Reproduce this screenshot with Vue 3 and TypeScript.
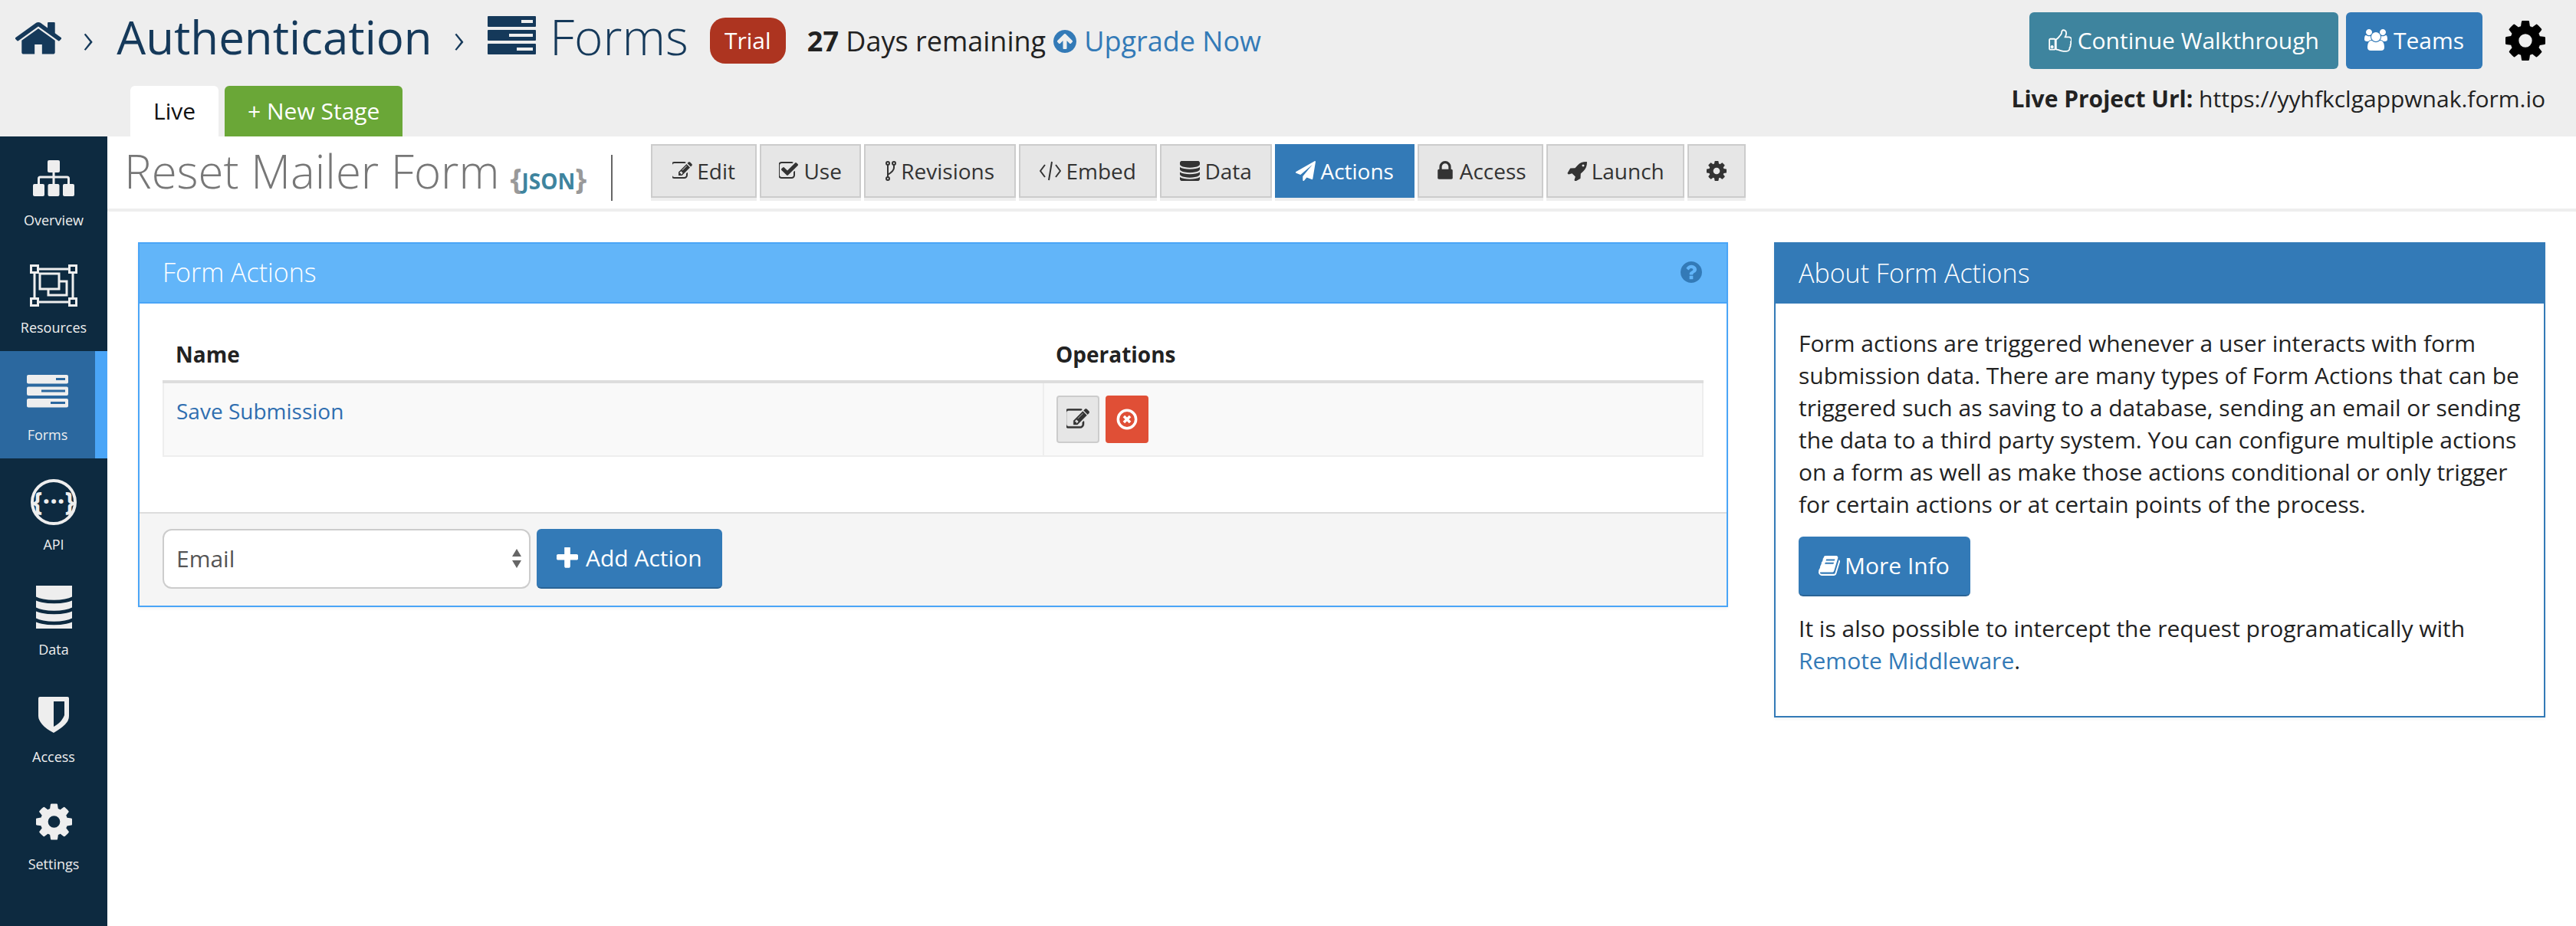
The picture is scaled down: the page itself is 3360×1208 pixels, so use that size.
<template>
  <div class="page">
    <header class="top">
      <div class="top-left">
        <div class="crumbs">
          <svg class="home" viewBox="100 130 1592 1420" preserveAspectRatio="none"><path :d="fa.home" /></svg>
          <span class="sep">›</span>
          <span class="crumb">Authentication</span>
          <span class="sep">›</span>
          <svg class="forms-ico" viewBox="0 0 63 50">
            <rect width="63" height="14" rx="1" y="0" />
            <rect width="63" height="14" rx="1" y="18" />
            <rect width="63" height="14" rx="1" y="36" />
            <rect class="slot" x="44" y="5" width="15" height="4" />
            <rect class="slot" x="28" y="23" width="31" height="4" />
            <rect class="slot" x="38" y="41" width="21" height="4" />
          </svg>
          <span class="crumb crumb--light">Forms</span>
          <span class="trial">Trial</span>
          <span class="days"><strong>27</strong> Days remaining</span>
          <a class="upgrade">
            <svg viewBox="128 128 1536 1536"><path :d="fa.up" /></svg>
            Upgrade Now
          </a>
        </div>
        <div class="stages">
          <span class="stage">Live</span>
          <span class="stage stage--new">+ New Stage</span>
        </div>
      </div>
      <div class="top-right">
        <div class="top-actions">
          <button class="tbtn tbtn--teal">
            <svg viewBox="0 60 1664 1664"><path class="outline" :d="fa.thumb" /></svg>
            Continue Walkthrough
          </button>
          <button class="tbtn">
            <svg viewBox="0 128 1920 1664"><path :d="fa.users" /></svg>
            Teams
          </button>
          <svg class="top-gear" viewBox="128 128 1536 1536"><path :d="fa.cog" /></svg>
        </div>
        <p class="url"><strong>Live Project Url:</strong> https://yyhfkclgappwnak.form.io</p>
      </div>
    </header>

    <nav class="side">
      <a v-for="item in nav" :key="item.label" class="side-item" :class="{ 'side-item--on': item.label === 'Forms' }">
        <svg v-if="item.icon === 'tree'" class="ico-tree" viewBox="0 0 54 47">
          <rect x="19" y="0" width="16" height="16" rx="2" />
          <rect x="0" y="31" width="15" height="16" rx="2" />
          <rect x="19.500" y="31" width="15" height="16" rx="2" />
          <rect x="39" y="31" width="15" height="16" rx="2" />
          <path class="line" d="M27 15v17M7.500 32v-8q0-2 2-2h35q2 0 2 2v8" />
        </svg>
        <svg v-else-if="item.icon === 'res'" class="ico-res" viewBox="0 0 62 55">
          <path class="line" d="M6 6h50v43H6z" />
          <path class="line" d="M13 12h25v20H13zM24 32v8h24V22H38" />
          <path class="handle" d="M1.500 1.500h9v9h-9zM51.500 1.500h9v9h-9zM1.500 44.500h9v9h-9zM51.500 44.500h9v9h-9z" />
        </svg>
        <svg v-else-if="item.icon === 'forms'" class="ico-forms" viewBox="0 0 54 43">
          <rect width="54" height="11.500" rx="2" y="0" />
          <rect width="54" height="11.500" rx="2" y="15.500" />
          <rect width="54" height="11.500" rx="2" y="31" />
          <rect class="slot-on" x="38" y="4" width="12" height="3" />
          <rect class="slot-on" x="19" y="19.500" width="31" height="3" />
          <rect class="slot-on" x="31" y="35" width="19" height="3" />
        </svg>
        <svg v-else-if="item.icon === 'api'" class="ico-api" viewBox="0 0 60 60">
          <circle class="line line--api" cx="30" cy="30" r="28" />
          <text x="30" y="41" text-anchor="middle">{···}</text>
        </svg>
        <svg v-else-if="item.icon === 'shield'" class="ico-shield" viewBox="0 0 40 47">
          <path fill-rule="evenodd" d="M2 0h36q2 0 2 2v23q0 6-5 11t-15 11Q10 42 5 36T0 25V2q0-2 2-2zM20 6v33q7-4 10-8t4-7V6z" />
        </svg>
        <svg v-else class="ico-fa" :viewBox="item.icon === 'db' ? '256 128 1280 1536' : '128 128 1536 1536'">
          <path :d="item.icon === 'db' ? fa.db : fa.cog" />
        </svg>
        <span>{{ item.label }}</span>
      </a>
    </nav>

    <main class="main">
      <div class="title-row">
        <h1 class="form-title">Reset Mailer Form</h1>
        <span class="json"><i>{</i>JSON<i>}</i></span>
        <span class="divider"></span>
        <div class="tabs">
          <a v-for="t in tabs" :key="t.key" class="tab" :class="{ 'tab--on': t.key === 'Actions' }">
            <svg v-if="t.key === 'Revisions'" class="fork" viewBox="0 0 14 26">
              <circle cx="3" cy="3" r="2" /><circle cx="11" cy="3" r="2" /><circle cx="3" cy="23" r="2" />
              <path d="M3 5v16M11 5v4q0 4-8 9" />
            </svg>
            <svg v-else-if="t.key === 'Embed'" class="code" viewBox="0 0 28 26">
              <path d="M7 5l-6 8 6 8M21 5l6 8-6 8M16 1l-4 24" />
            </svg>
            <svg v-else class="tab-ico" :viewBox="t.box"><path :d="t.path" /></svg>
            <span v-if="t.label">{{ t.label }}</span>
          </a>
        </div>
      </div>

      <div class="content">
        <section class="panel panel--sky">
          <div class="panel-head">
            <h2>Form Actions</h2>
            <svg class="help" viewBox="128 128 1536 1536"><path :d="fa.help" /></svg>
          </div>
          <div class="panel-body">
            <table class="grid">
              <thead>
                <tr><th class="name-col">Name</th><th>Operations</th></tr>
              </thead>
              <tbody>
                <tr>
                  <td class="name-cell"><a class="link">Save Submission</a></td>
                  <td>
                    <div class="ops">
                      <button class="op">
                        <svg viewBox="128 128 1664 1536"><path :d="fa.edit" /></svg>
                      </button>
                      <button class="op op--del">
                        <svg viewBox="0 0 24 24">
                          <circle cx="12" cy="12" r="10" />
                          <path d="M8.500 8.500l7 7M15.500 8.500l-7 7" />
                        </svg>
                      </button>
                    </div>
                  </td>
                </tr>
              </tbody>
            </table>
          </div>
          <div class="panel-foot">
            <div class="select-wrap">
              <select class="select"><option>Email</option></select>
              <span class="arrows"></span>
            </div>
            <button class="btn">
              <svg viewBox="192 192 1408 1408"><path :d="fa.plus" /></svg>
              Add Action
            </button>
          </div>
        </section>

        <aside class="panel panel--blue">
          <div class="panel-head"><h2>About Form Actions</h2></div>
          <div class="about">
            <p>Form actions are triggered whenever a user interacts with form submission data. There are many types of Form Actions that can be triggered such as saving to a database, sending an email or sending the data to a third party system. You can configure multiple actions on a form as well as make those actions conditional or only trigger for certain actions or at certain points of the process.</p>
            <button class="btn btn--info">
              <svg viewBox="64 128 1664 1536"><path :d="fa.book" /></svg>
              More Info
            </button>
            <p>It is also possible to intercept the request programatically with <a class="link-plain">Remote Middleware</a>.</p>
          </div>
        </aside>
      </div>
    </main>
  </div>
</template>

<script setup lang="ts">
const fa = {
  home: 'M1472 992v480q0 26-19 45t-45 19h-384v-384h-256v384h-384q-26 0-45-19t-19-45v-480q0-1 .5-3t.5-3l575-474 575 474q1 2 1 6zm223-69l-62 74q-8 9-21 11h-3q-13 0-21-7l-692-577-692 577q-12 8-24 7-13-2-21-11l-62-74q-8-10-7-23.500t11-21.500l719-599q32-26 76-26t76 26l244 204v-195q0-14 9-23t23-9h192q14 0 23 9t9 23v408l219 182q10 8 11 21.500t-7 23.500z',
  cog: 'M1152 896q0-106-75-181t-181-75-181 75-75 181 75 181 181 75 181-75 75-181zm512-109v222q0 12-8 23t-20 13l-185 28q-19 54-39 91 35 50 107 138 10 12 10 25t-9 23q-27 37-99 108t-94 71q-12 0-26-9l-138-108q-44 23-91 38-16 136-29 186-7 28-36 28h-222q-14 0-24.500-8.500t-11.500-21.500l-28-184q-49-16-90-37l-141 107q-10 9-25 9-14 0-25-11-126-114-165-168-7-10-7-23 0-12 8-23 15-21 51-66.500t54-70.500q-27-50-41-99l-183-27q-13-2-21-12.500t-8-23.500v-222q0-12 8-23t19-13l186-28q14-46 39-92-40-57-107-138-10-12-10-24 0-10 9-23 26-36 98.500-107.500t94.500-71.500q13 0 26 10l138 107q44-23 91-38 16-136 29-186 7-28 36-28h222q14 0 24.500 8.500t11.500 21.500l28 184q49 16 90 37l142-107q9-9 24-9 13 0 25 10 129 119 165 170 7 8 7 22 0 12-8 23-15 21-51 66.500t-54 70.500q26 50 41 98l183 28q13 2 21 12.500t8 23.500z',
  db: 'M896 768q237 0 443-43t325-127v170q0 69-103 128t-280 93.500-385 34.500-385-34.500-280-93.500-103-128v-170q119 84 325 127t443 43zm0 768q237 0 443-43t325-127v170q0 69-103 128t-280 93.500-385 34.500-385-34.500-280-93.500-103-128v-170q119 84 325 127t443 43zm0-384q237 0 443-43t325-127v170q0 69-103 128t-280 93.500-385 34.500-385-34.500-280-93.500-103-128v-170q119 84 325 127t443 43zm0-1152q208 0 385 34.500t280 93.500 103 128v128q0 69-103 128t-280 93.500-385 34.500-385-34.500-280-93.500-103-128v-128q0-69 103-128t280-93.500 385-34.500z',
  lock: 'M640 768h512v-192q0-106-75-181t-181-75-181 75-75 181v192zm832 96v576q0 40-28 68t-68 28h-960q-40 0-68-28t-28-68v-576q0-40 28-68t68-28h32v-192q0-184 132-316t316-132 316 132 132 316v192h32q40 0 68 28t28 68z',
  plus: 'M1600 736v192q0 40-28 68t-68 28h-416v416q0 40-28 68t-68 28h-192q-40 0-68-28t-28-68v-416h-416q-40 0-68-28t-28-68v-192q0-40 28-68t68-28h416v-416q0-40 28-68t68-28h192q40 0 68 28t28 68v416h416q40 0 68 28t28 68z',
  plane: 'M1764 11q33 24 27 64l-256 1536q-5 29-32 45-14 8-31 8-11 0-24-5l-453-185-242 295q-18 23-49 23-13 0-22-4-19-7-30.500-23.500t-11.500-36.500v-349l864-1059-1069 925-395-162q-37-14-40-55-2-40 32-59l1664-960q15-9 32-9 20 0 36 11z',
  edit: 'M888 1184l116-116-152-152-116 116v56h96v96h56zm440-720q-16-16-33 1l-350 350q-17 17-1 33t33-1l350-350q17-17 1-33zm80 594v190q0 119-84.500 203.500t-203.500 84.500h-832q-119 0-203.500-84.500t-84.500-203.500v-832q0-119 84.500-203.500t203.500-84.500h832q63 0 117 25 15 7 18 23 3 17-9 29l-49 49q-14 14-32 8-23-6-45-6h-832q-66 0-113 47t-47 113v832q0 66 47 113t113 47h832q66 0 113-47t47-113v-126q0-13 9-22l64-64q15-15 35-7t20 29zm-96-738l288 288-672 672h-288v-288zm444 132l-92 92-288-288 92-92q28-28 68-28t68 28l152 152q28 28 28 68t-28 68z',
  check: 'M1472 930v318q0 119-84.500 203.500t-203.500 84.500h-832q-119 0-203.500-84.500t-84.500-203.500v-832q0-119 84.500-203.500t203.500-84.500h832q63 0 117 25 15 7 18 23 3 17-9 29l-49 49q-10 10-23 10-3 0-9-2-23-6-45-6h-832q-66 0-113 47t-47 113v832q0 66 47 113t113 47h832q66 0 113-47t47-113v-254q0-13 9-22l64-64q10-10 23-10 6 0 12 3 20 8 20 29zm231-489l-814 814q-24 24-57 24t-57-24l-430-430q-24-24-24-57t24-57l110-110q24-24 57-24t57 24l263 263 647-647q24-24 57-24t57 24l110 110q24 24 24 57t-24 57z',
  rocket: 'M1504 448q0-40-28-68t-68-28-68 28-28 68 28 68 68 28 68-28 28-68zm224-288q0 249-75.500 430.500t-253.500 360.500q-81 80-195 176l-20 379q-2 16-16 26l-384 224q-7 4-16 4-12 0-23-9l-64-64q-13-14-8-32l85-276-281-281-276 85q-3 1-9 1-14 0-23-9l-64-64q-17-19-5-39l224-384q10-14 26-16l379-20q96-114 176-195 188-187 358-258t431-71q14 0 24 9.500t10 22.500z',
  users: 'M593 896q-162 5-265 128h-134q-82 0-138-40.500t-56-118.500q0-353 124-353 6 0 43.500 21t97.500 42.500 119 21.500q67 0 133-23-5 37-5 66 0 139 81 256zm1071 637q0 120-73 189.500t-194 69.500h-874q-121 0-194-69.500t-73-189.500q0-53 3.500-103.500t14-109 26.500-108.500 43-97.500 62-81 85.500-53.500 111.500-20q10 0 43 21.500t73 48 107 48 135 21.500 135-21.500 107-48 73-48 43-21.500q61 0 111.500 20t85.500 53.500 62 81 43 97.500 26.500 108.500 14 109 3.500 103.500zm-1024-1277q0 106-75 181t-181 75-181-75-75-181 75-181 181-75 181 75 75 181zm704 384q0 159-112.500 271.500t-271.500 112.500-271.500-112.500-112.500-271.500 112.500-271.500 271.500-112.500 271.500 112.500 112.500 271.500zm576 225q0 78-56 118.500t-138 40.500h-134q-103-123-265-128 81-117 81-256 0-29-5-66 66 23 133 23 59 0 119-21.500t97.500-42.500 43.500-21q124 0 124 353zm-128-609q0 106-75 181t-181 75-181-75-75-181 75-181 181-75 181 75 75 181z',
  thumb: 'M320 1344q0-26-19-45t-45-19q-27 0-45.500 19t-18.500 45q0 27 18.500 45.500t45.500 18.500q26 0 45-18.500t19-45.500zm160-512v640q0 26-19 45t-45 19h-288q-26 0-45-19t-19-45v-640q0-26 19-45t45-19h288q26 0 45 19t19 45zm1184 0q0 86-55 149 15 44 15 76 3 76-43 137 17 56 0 117-15 57-54 94 9 112-49 181-64 76-197 78h-129q-66 0-144-15.500t-121.500-29-120.500-39.500q-123-43-158-44-26-1-45-19.500t-19-44.500v-641q0-25 18-43.500t43-20.500q24-2 76-59t101-121q68-87 101-120 18-18 31-48t17.500-48.500 13.500-60.500q7-39 12.500-61t19.500-52 34-50q19-19 45-19 46 0 82.500 10.500t60 26 40 40.500 24 45 12 50 5 45 .5 39q0 38-9.500 76t-19 60-27.500 56q-3 6-10 18t-11 22-8 24h277q78 0 135 57t57 135z',
  book: 'M1703 478q40 57 18 129l-275 906q-19 64-76.500 107.500t-122.500 43.500h-923q-77 0-148.500-53.500t-99.500-131.500q-24-67-2-127 0-4 3-27t4-37q1-8-3-21.500t-3-19.500q2-11 8-21t16.500-23.500 16.500-23.500q23-38 45-91.500t30-91.500q3-10 .5-30t-.5-28q3-11 17-28t17-23q21-36 42-92t25-90q1-9-2.500-32t.5-28q4-13 22-30.500t22-22.500q19-26 42.500-84.500t27.500-96.500q1-8-3-25.500t-2-26.500q2-8 9-18t18-23 17-21q8-12 16.500-30.500t15-35 16-36 19.500-32 26.500-23.500 36-11.500 47.500 5.500l-1 3q38-9 51-9h761q74 0 114 56t18 130l-274 906q-36 119-71.500 153.500t-128.500 34.500h-869q-27 0-38 15-11 16-1 43 24 70 144 70h923q29 0 56-15.500t35-41.500l300-987q7-22 5-57 38 15 59 43zm-1064 2q-4 13 2 22.500t20 9.500h608q13 0 25.500-9.500t16.500-22.500l21-64q4-13-2-22.500t-20-9.500h-608q-13 0-25.500 9.500t-16.500 22.500zm-83 256q-4 13 2 22.500t20 9.500h608q13 0 25.500-9.500t16.500-22.500l21-64q4-13-2-22.500t-20-9.500h-608q-13 0-25.500 9.500t-16.500 22.500z',
  up: 'M1412 895q0-27-18-45l-362-362-91-91q-18-18-45-18t-45 18l-91 91-362 362q-18 18-18 45t18 45l91 91q18 18 45 18t45-18l189-189v502q0 26 19 45t45 19h128q26 0 45-19t19-45v-502l189 189q19 19 45 19t45-19l91-91q18-18 18-45zm252 1q0 209-103 385.500t-279.500 279.500-385.500 103-385.500-103-279.500-279.500-103-385.500 103-385.500 279.500-279.500 385.500-103 385.500 103 279.500 279.500 103 385.500z',
  help: 'M1024 1376v-192q0-14-9-23t-23-9h-192q-14 0-23 9t-9 23v192q0 14 9 23t23 9h192q14 0 23-9t9-23zm256-672q0-88-55.500-163t-138.500-116-170-41q-243 0-371 213-15 24 8 42l132 100q7 6 19 6 16 0 25-12 53-68 86-92 34-24 86-24 48 0 85.500 26t37.500 59q0 38-20 61t-68 45q-63 28-115.500 86.500t-52.500 125.500v36q0 14 9 23t23 9h192q14 0 23-9t9-23q0-19 21.500-49.500t54.500-49.500q32-18 49-28.500t46-35 44.500-48 28-60.500 12.500-81zm384 192q0 209-103 385.500t-279.500 279.500-385.500 103-385.500-103-279.500-279.500-103-385.500 103-385.500 279.500-279.500 385.500-103 385.500 103 279.500 279.500 103 385.500z',
}

const nav = [
  { label: 'Overview', icon: 'tree' },
  { label: 'Resources', icon: 'res' },
  { label: 'Forms', icon: 'forms' },
  { label: 'API', icon: 'api' },
  { label: 'Data', icon: 'db' },
  { label: 'Access', icon: 'shield' },
  { label: 'Settings', icon: 'cog' },
]

const tabs = [
  { key: 'Edit', label: 'Edit', path: fa.edit, box: '128 128 1664 1536' },
  { key: 'Use', label: 'Use', path: fa.check, box: '128 128 1664 1536' },
  { key: 'Revisions', label: 'Revisions', path: '', box: '' },
  { key: 'Embed', label: 'Embed', path: '', box: '' },
  { key: 'Data', label: 'Data', path: fa.db, box: '128 128 1536 1536' },
  { key: 'Actions', label: 'Actions', path: fa.plane, box: '0 0 1792 1792' },
  { key: 'Access', label: 'Access', path: fa.lock, box: '256 128 1280 1536' },
  { key: 'Launch', label: 'Launch', path: fa.rocket, box: '64 128 1664 1536' },
  { key: 'Settings', label: '', path: fa.cog, box: '128 128 1536 1536' },
]
</script>

<style>
html, body { margin: 0; background: #fff; }
</style>

<style scoped>
.page {
  width: 3360px;
  height: 1208px;
  overflow: hidden;
  display: grid;
  grid-template-columns: 140px 1fr;
  grid-template-rows: 178px 1fr;
  font-family: "Open Sans", sans-serif;
  font-size: 30px;
  line-height: 42px;
  color: #222;
}

/* top bar */
.top {
  grid-column: 1 / -1;
  background: #eee;
  display: flex;
  justify-content: space-between;
}
.crumbs { height: 112px; display: flex; align-items: center; padding: 0 0 16px 20px; box-sizing: border-box; }
.home { width: 60px; height: 46px; fill: #15395a; margin-right: 28px; }
.sep { font-size: 56px; font-weight: 300; color: #15395a; margin-right: 30px; line-height: 1; }
.crumb { font-size: 60px; color: #15395a; line-height: 82px; margin-right: 28px; }
.crumb--light { font-size: 64px; font-weight: 300; margin-right: 28px; }
.forms-ico { width: 63px; height: 50px; fill: #15395a; margin: 0 18px 4px 0; }
.slot { fill: #eee; }
.trial {
  background: #ad3420;
  color: #fff;
  width: 99px;
  height: 60px;
  line-height: 60px;
  text-align: center;
  border-radius: 20px;
  margin-right: 28px;
  margin-top: 10px;
}
.days { font-size: 36px; margin-right: 10px; margin-top: 12px; }
.upgrade { font-size: 36px; color: #337ab7; display: flex; align-items: center; gap: 10px; margin-top: 12px; }
.upgrade svg { width: 30px; height: 30px; fill: #337ab7; }

.stages { display: flex; gap: 8px; margin-left: 170px; }
.stage {
  height: 66px;
  line-height: 66px;
  padding: 0 30px;
  background: #fff;
  color: #111;
  border-radius: 6px 6px 0 0;
}
.stage--new { background: #6aa737; color: #fff; }

.top-right { display: flex; flex-direction: column; align-items: flex-end; padding: 16px 40px 0 0; }
.top-actions { display: flex; align-items: center; gap: 10px; }
.tbtn {
  height: 74px;
  border: 0;
  border-radius: 6px;
  padding: 0 24px;
  background: #337ab7;
  color: #fff;
  font: inherit;
  display: flex;
  align-items: center;
  gap: 8px;
}
.tbtn svg { width: 30px; height: 30px; fill: #fff; }
.tbtn .outline { fill: none; stroke: #fff; stroke-width: 100; }
.tbtn--teal { background: #3e849e; padding: 0 25px; }
.top-gear { width: 52px; height: 52px; fill: #000; margin-left: 20px; }
.url { margin: 18px 0 0; }
.url strong { font-weight: 700; }

/* side nav */
.side { background: #0d2a40; display: flex; flex-direction: column; }
.side-item {
  height: 140px;
  box-sizing: border-box;
  padding-top: 11px;
  display: grid;
  grid-template-rows: 86px 24px;
  justify-items: center;
  align-items: center;
  color: #eee;
  font-size: 18px;
  font-weight: 500;
  line-height: 24px;
  fill: #eee;
}
.side-item:nth-child(4) { padding-top: 14px; }
.side-item--on { background: #2b689f; border-right: 16px solid #4aa5f7; }
.ico-tree { width: 54px; height: 47px; }
.ico-res { width: 62px; height: 55px; }
.ico-forms { width: 54px; height: 43px; margin-bottom: 4px; }
.ico-api { width: 60px; height: 60px; }
.ico-api text { font: 700 34px "Open Sans", sans-serif; fill: #eee; }
.ico-shield { width: 40px; height: 47px; }
.ico-fa { width: 47px; height: 56px; }
.line { fill: none; stroke: #eee; stroke-width: 3; }
.line--api { stroke-width: 4; }
.handle { fill: #0d2a40; stroke: #eee; stroke-width: 3; }
.slot-on { fill: #2b689f; }

/* main */
.main { display: flex; flex-direction: column; min-width: 0; }
.title-row {
  height: 98px;
  border-bottom: 4px solid #eee;
  display: flex;
  padding: 10px 0 0 22px;
  box-sizing: border-box;
}
.form-title { margin: 0; font-size: 60px; font-weight: 300; color: #777; line-height: 70px; }
.json { font-size: 28px; font-weight: 700; color: #3e849e; margin: 14px 0 0 14px; line-height: 60px; }
.json i { font-style: normal; color: #999; font-size: 38px; }
.divider { width: 2px; height: 60px; background: #666; margin: 14px 50px 0 32px; }
.tabs {
  display: grid;
  grid-template-columns: 138px 132px 198px 180px 146px 182px 164px 180px 76px;
  gap: 4px;
  font-size: 28px;
  height: 70px;
}
.tab {
  height: 70px;
  box-sizing: border-box;
  border: 2px solid #ccc;
  background: #e6e6e6;
  color: #333;
  display: flex;
  align-items: center;
  justify-content: center;
  gap: 6px;
  box-shadow: 0 4px 0 #eee;
  fill: #333;
}
.tab--on { background: #337ab7; border-color: #337ab7; color: #fff; fill: #fff; }
.tab-ico { width: 26px; height: 26px; }
.fork { width: 14px; height: 26px; fill: none; stroke: #333; stroke-width: 2; }
.code { width: 28px; height: 26px; fill: none; stroke: #333; stroke-width: 2; }

.content { display: flex; align-items: flex-start; padding: 40px 40px 0; gap: 60px; }
.panel { box-sizing: border-box; border: 2px solid; background: #fff; box-shadow: 0 2px 4px rgba(0, 0, 0, 0.05); }
.panel--sky { width: 2074px; border-color: #4aa5f7; }
.panel--blue { width: 1006px; border-color: #337ab7; }
.panel-head {
  height: 78px;
  padding: 0 30px 2px;
  display: flex;
  align-items: center;
  justify-content: space-between;
  color: #fff;
  box-sizing: border-box;
}
.panel-head h2 { margin: 0; font-size: 34px; font-weight: 300; line-height: 40px; }
.panel--sky .panel-head { background: #62b5f9; border-bottom: 2px solid #4aa5f7; padding-right: 32px; }
.panel--blue .panel-head { background: #337ab7; }
.help { width: 28px; height: 28px; fill: #337ab7; }

.panel-body { padding: 30px 30px 72px; }
.grid { width: 100%; border-collapse: collapse; table-layout: fixed; font-size: 28px; }
.grid th { text-align: left; font-weight: 700; padding: 16px 16px 14px; border-bottom: 4px solid #ddd; line-height: 40px; }
.name-col { width: 1148px; box-sizing: border-box; }
.grid td { background: #f9f9f9; border: 2px solid #eee; border-top: 0; padding: 16px; vertical-align: top; height: 95px; box-sizing: border-box; line-height: 40px; }
.link { color: #2f6eb0; }
.ops { display: flex; gap: 8px; }
.op {
  width: 56px;
  height: 62px;
  box-sizing: border-box;
  border: 2px solid #ccc;
  border-radius: 4px;
  background: #e6e6e6;
  padding: 0;
  display: flex;
  align-items: center;
  justify-content: center;
  fill: #333;
}
.op svg { width: 30px; height: 28px; }
.op path { stroke: #333; stroke-width: 20; }
.op--del { background: #e04f36; border-color: #e04f36; }
.op--del svg { width: 28px; height: 28px; fill: none; stroke: #fff; stroke-width: 3; }
.op--del path { stroke: #fff; stroke-width: 3; }

.panel-foot {
  background: #f5f5f5;
  border-top: 2px solid #ddd;
  padding: 20px 30px;
  height: 122px;
  box-sizing: border-box;
  display: flex;
  gap: 8px;
}
.select-wrap { position: relative; }
.select {
  width: 480px;
  height: 78px;
  box-sizing: border-box;
  appearance: none;
  border: 2px solid #ccc;
  border-radius: 12px;
  background: #fff;
  padding: 0 16px;
  font: inherit;
  color: #555;
}
.arrows {
  position: absolute;
  right: 12px;
  top: 26px;
  width: 0;
  border-left: 6px solid transparent;
  border-right: 6px solid transparent;
  border-bottom: 10px solid #666;
}
.arrows::after {
  content: '';
  position: absolute;
  left: -6px;
  top: 15px;
  border-left: 6px solid transparent;
  border-right: 6px solid transparent;
  border-top: 10px solid #666;
}
.btn {
  height: 78px;
  border: 0;
  border-bottom: 2px solid #2a6496;
  border-radius: 6px;
  background: #337ab7;
  color: #fff;
  font: inherit;
  padding: 0 26px;
  display: flex;
  align-items: center;
  gap: 10px;
  fill: #fff;
}
.btn svg { width: 28px; height: 28px; }
.btn--info { margin: 21px 0; gap: 6px; padding-right: 27px; }

.about { padding: 31px 30px 51px; }
.about p { margin: 0; }
.link-plain { color: #337ab7; }
</style>
